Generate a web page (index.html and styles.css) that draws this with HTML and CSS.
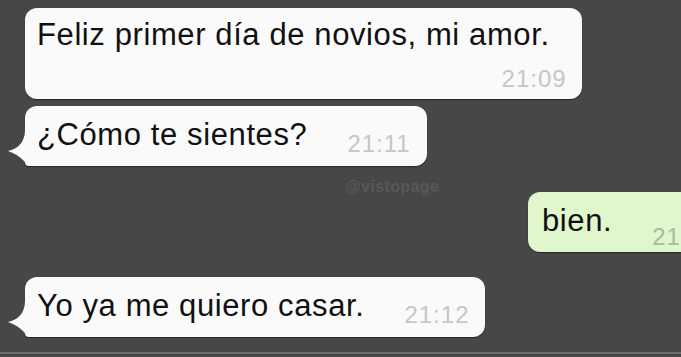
FILE: index.html
```html
<!DOCTYPE html>
<html lang="es">
<head>
<meta charset="utf-8">
<title>Chat</title>
<link rel="stylesheet" href="styles.css">
</head>
<body>
<div class="screen">
  <div class="chat">
    <div class="bubble in stacked">
      <div class="text wide">Feliz primer día de novios, mi amor.</div>
      <div class="time">21:09</div>
    </div>
    <div class="bubble in tailed">
      <svg class="tail" viewBox="0 0 30 36" width="30" height="36" aria-hidden="true"><path d="M18 0 C18 12 11 19 1 21 C7 23 12 26 16 30 C19 34 23 36 28 36 L30 36 L30 0 Z"/></svg>
      <div class="text">¿Cómo te sientes?</div>
      <div class="time">21:11</div>
    </div>
    <div class="bubble out">
      <div class="text">bien.</div>
      <div class="time">21:11</div>
    </div>
    <div class="bubble in tailed">
      <svg class="tail" viewBox="0 0 30 36" width="30" height="36" aria-hidden="true"><path d="M18 0 C18 12 11 19 1 21 C7 23 12 26 16 30 C19 34 23 36 28 36 L30 36 L30 0 Z"/></svg>
      <div class="text">Yo ya me quiero casar.</div>
      <div class="time">21:12</div>
    </div>
    <div class="watermark">@vistopage</div>
  </div>
  <div class="rule"></div>
</div>
</body>
</html>
```
FILE: styles.css
```css
html, body {
  margin: 0;
  padding: 0;
}
body {
  background: #474747;
  font-family: "Liberation Sans", Arial, sans-serif;
  overflow: hidden;
}
.screen {
  width: 681px;
  height: 357px;
  display: flex;
  flex-direction: column;
  overflow: hidden;
}
.chat {
  position: relative;
  height: 352px;
  padding: 8px 0 0 25px;
  box-sizing: border-box;
  display: flex;
  flex-direction: column;
  align-items: flex-start;
}
.rule {
  height: 2px;
  background: #6e6e6e;
}
.bubble {
  position: relative;
  background: #fafafa;
  border-radius: 12px;
  box-shadow: 0 1px 1px rgba(0, 0, 0, 0.45);
  display: flex;
  align-items: flex-end;
  gap: 40px;
  padding: 11px 16px 9px 12px;
  box-sizing: border-box;
  height: 60px;
}
.bubble + .bubble {
  margin-top: 7px;
}
.bubble.out {
  margin-top: 26px;
  margin-left: 503px;
  background: #e0f6cc;
  padding-left: 14px;
}
.bubble.out + .bubble {
  margin-top: 25px;
}
.bubble.stacked {
  flex-direction: column;
  align-items: flex-end;
  gap: 0;
  height: 91px;
  padding: 9px 15px 7px 12px;
}
.text {
  font-size: 31px;
  line-height: 36px;
  letter-spacing: 0.6px;
  color: #111111;
  margin-bottom: 4px;
  white-space: nowrap;
}
.text.wide {
  align-self: flex-start;
  margin: 0 17px 13px 0;
}
.time {
  font-size: 24px;
  line-height: 26px;
  letter-spacing: 1px;
  color: #c6c6c6;
  white-space: nowrap;
}
.out .time {
  color: #a9b9a1;
  margin-bottom: -7px;
}
.tailed {
  border-bottom-left-radius: 4px;
}
.tail {
  position: absolute;
  left: -18px;
  bottom: 0;
  fill: #fafafa;
  overflow: visible;
}
.watermark {
  position: absolute;
  left: 345px;
  top: 178px;
  font-size: 16px;
  font-weight: bold;
  color: #585858;
  letter-spacing: 0.4px;
}
```
